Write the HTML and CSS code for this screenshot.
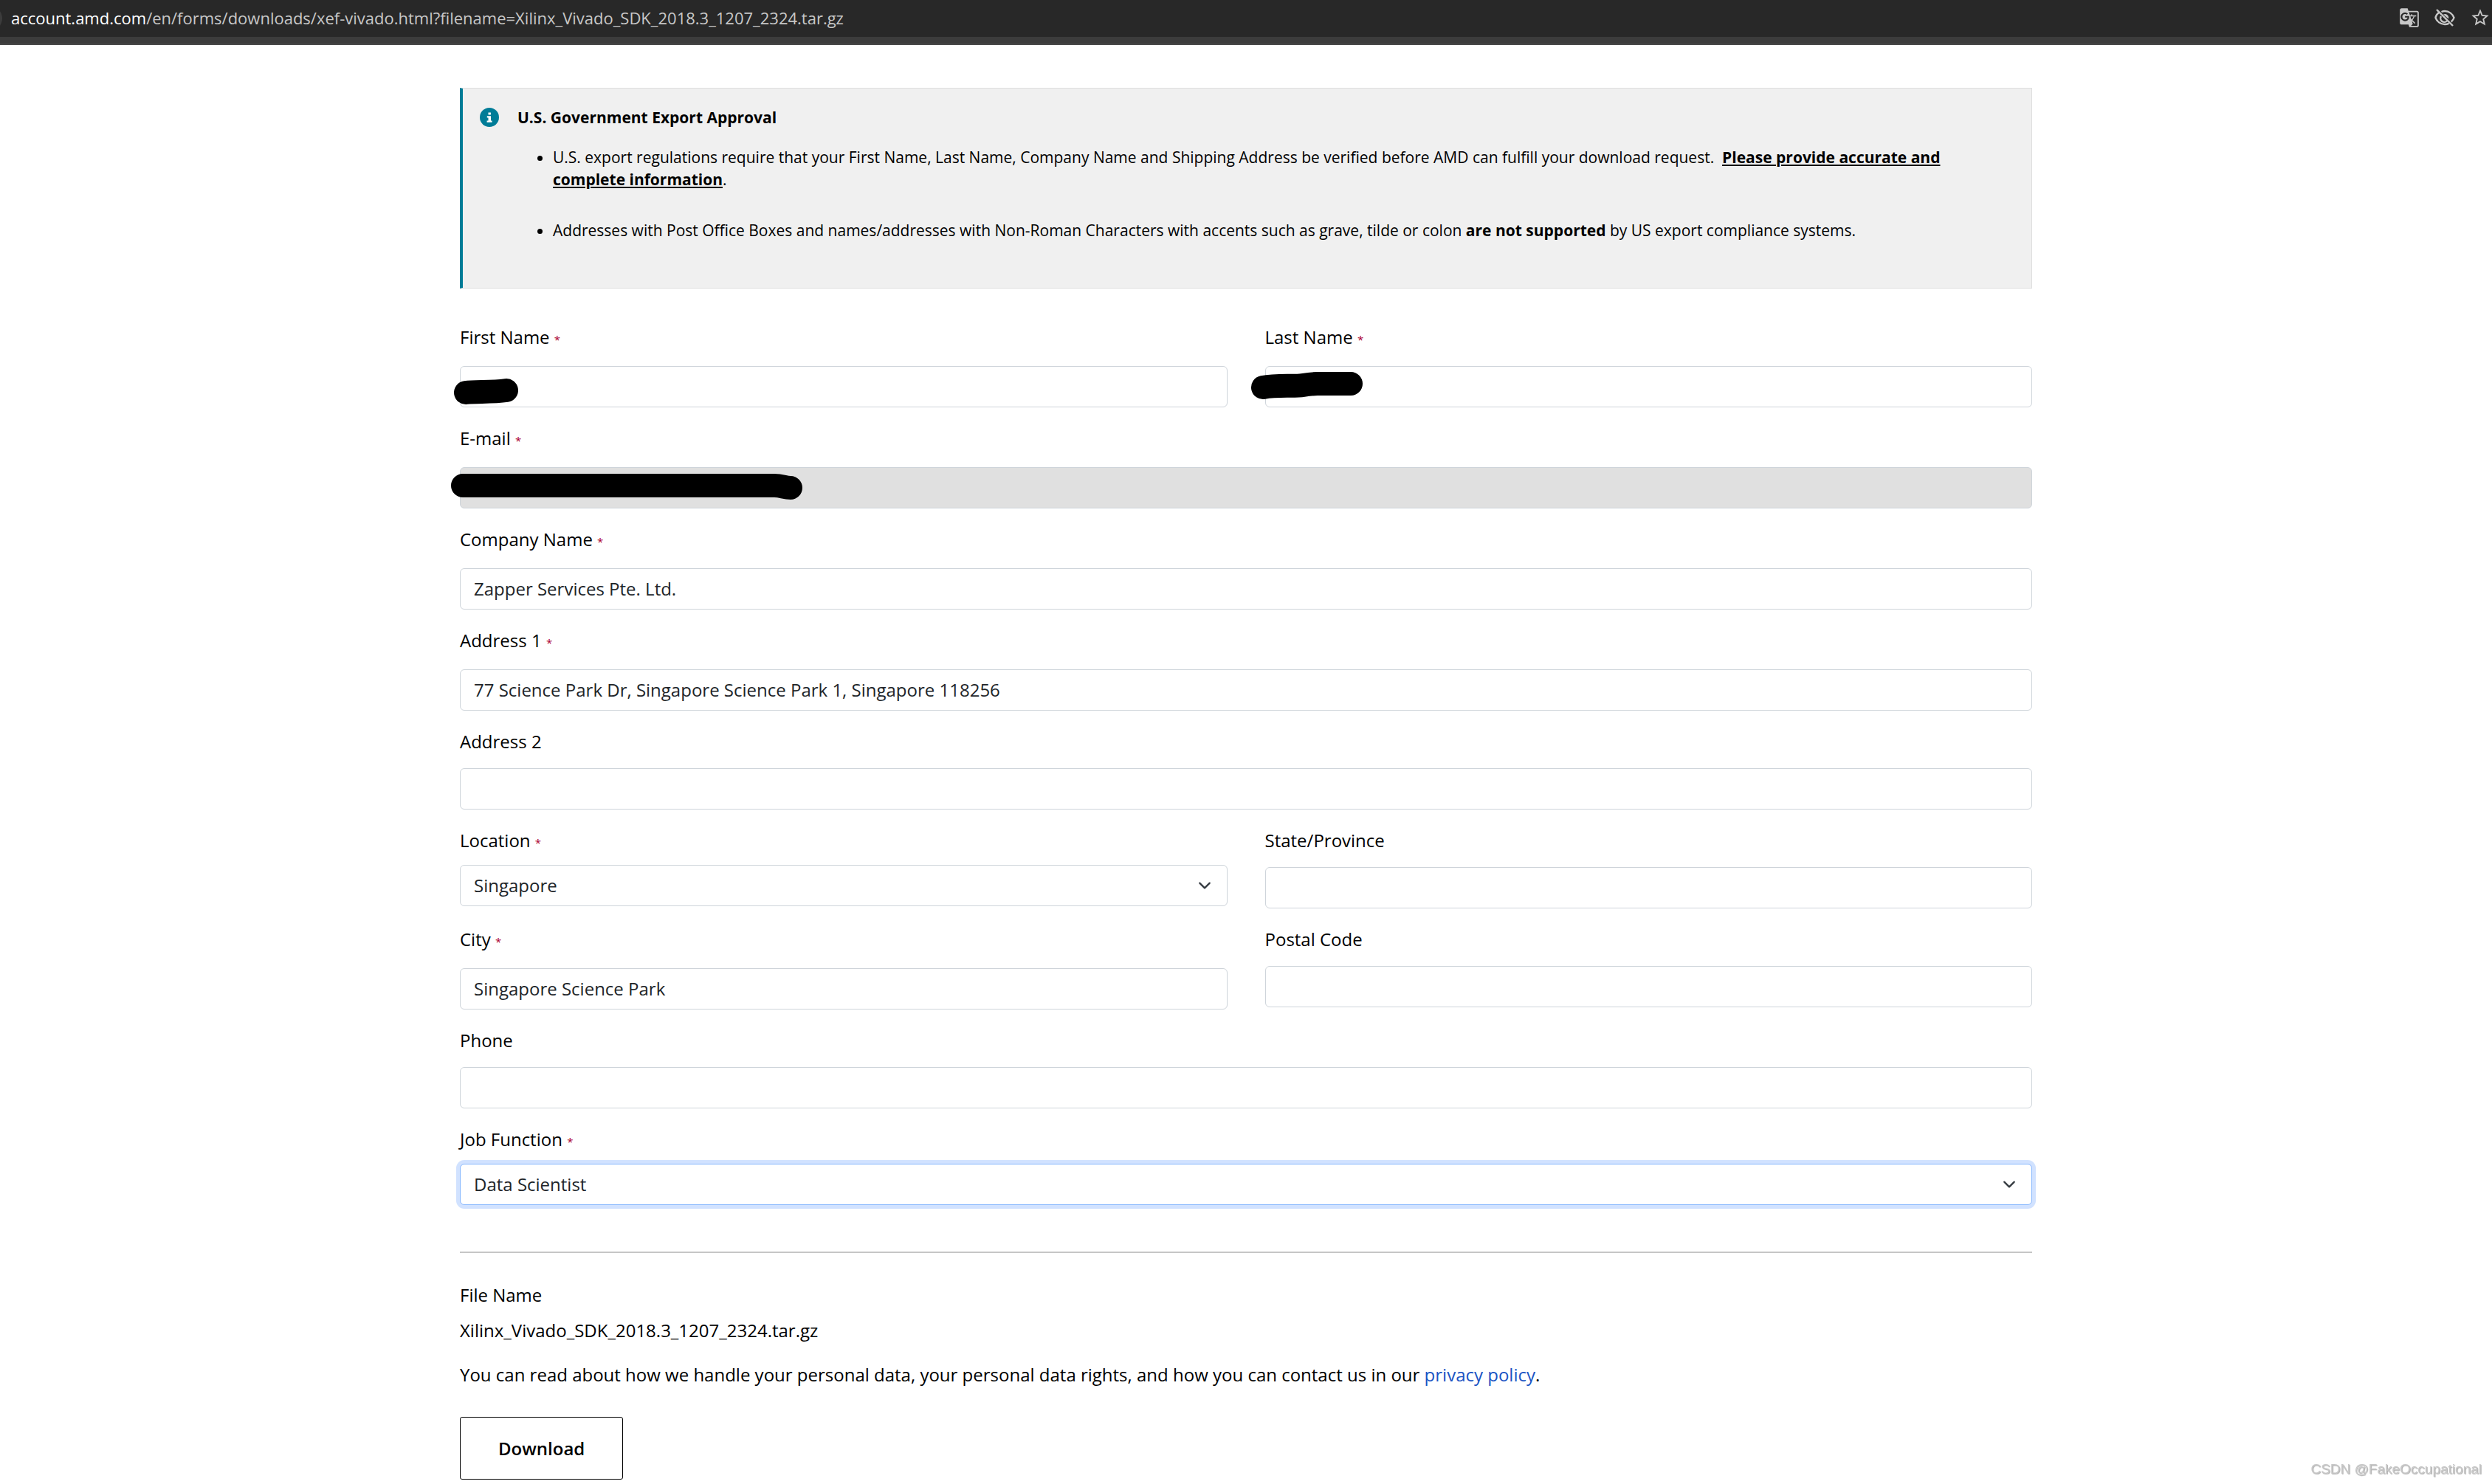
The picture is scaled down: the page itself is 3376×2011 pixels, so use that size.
FILE: index.html
```html
<!DOCTYPE html>
<html lang="en">
  <head>
    <meta charset="utf-8" />
    <title>U.S. Government Export Approval</title>
    <link rel="stylesheet" href="styles.css" />
  </head>
  <body>
    <div class="address-bar">
      <p class="url"><span class="url-host">account.amd.com</span>/en/forms/downloads/xef-vivado.html?filename=Xilinx_Vivado_SDK_2018.3_1207_2324.tar.gz</p>
      <div class="address-icons">
        <svg width="28" height="28" viewBox="0 0 24 24" fill="currentColor">
          <path d="M21 4H11l-1-3H3c-1.1 0-2 .9-2 2v15c0 1.1.9 2 2 2h8l1 3h9c1.1 0 2-.9 2-2V6c0-1.1-.9-2-2-2zM7 16c-2.76 0-5-2.24-5-5s2.24-5 5-5c1.35 0 2.48.5 3.35 1.3L9.03 8.57c-.38-.36-1.04-.78-2.03-.78-1.74 0-3.15 1.44-3.15 3.21S5.26 14.21 7 14.21c2.01 0 2.84-1.44 2.92-2.41H7v-1.71h4.68c.07.31.12.61.12 1.02C11.8 13.97 9.89 16 7 16zm6.17-5.42h3.7c-.43 1.25-1.11 2.43-2.05 3.47-.31-.35-.6-.72-.86-1.1l-.79-2.37zm8.33 9.92c0 .55-.45 1-1 1H14l2-2.5-1.04-3.1 3.1 3.1.92-.92-3.3-3.25.02-.02c1.13-1.25 1.93-2.69 2.4-4.22H20v-1.3h-4.53V8h-1.29v1.29h-1.44L11.46 5.5h9.04c.55 0 1 .45 1 1v14z" />
        </svg>
        <svg width="28" height="28" viewBox="0 0 28 28" fill="none" stroke="currentColor" stroke-width="2.4">
          <path d="M6 7C3.500 9 2 11.500 1.500 14c1.700 5 6.700 9 12.500 9 2 0 4-.5 5.800-1.400M9.500 6c1.400-.6 2.900-1 4.500-1 5.800 0 10.800 4 12.500 9-.7 2.200-2 4-3.700 5.500" />
          <path d="M9 12a5.200 5.200 0 0 0 8 6.500" />
          <path d="M12 9.500a5 5 0 0 1 7 6z" fill="currentColor" stroke="none" />
          <path d="M3 3l22 22" />
        </svg>
        <svg width="28" height="28" viewBox="0 0 24 24" fill="currentColor">
          <path d="M22 9.24l-7.19-.62L12 2 9.19 8.63 2 9.24l5.46 4.730L5.820 21 12 17.270 18.180 21l-1.630-7.030L22 9.240zM12 15.400l-3.760 2.270 1-4.280-3.320-2.880 4.380-.380L12 6.100l1.710 4.040 4.380.380-3.320 2.880 1 4.280L12 15.400z" />
        </svg>
      </div>
    </div>

    <div class="container">
      <div class="alert">
        <svg class="alert-icon" width="26" height="26" viewBox="0 0 26 26">
          <circle cx="13" cy="13" r="13" fill="#007c97" />
          <path d="M11.500 6.500h3.400v3h-3.400zM9.800 11.300h5.200v6.200h1.600v2.200H9.600v-2.200h1.900v-4H9.800z" fill="#fff" />
        </svg>
        <div>
          <h2>U.S. Government Export Approval</h2>
          <ul>
            <li>U.S. export regulations require that your First Name, Last Name, Company Name and Shipping Address be verified before AMD can fulfill your download request.&nbsp; <b class="underline">Please provide accurate and complete information</b>.</li>
            <li>Addresses with Post Office Boxes and names/addresses with Non-Roman Characters with accents such as grave, tilde or colon <b>are not supported</b> by US export compliance systems.</li>
          </ul>
        </div>
      </div>

      <form>
        <div class="form-row">
          <div class="form-group required">
            <label for="first_name">First Name <span class="star">*</span></label>
            <div class="control">
              <input type="text" id="first_name" name="first_name" />
              <svg class="redacted" width="110" height="56"><path d="M28 36C42 34 62 36 83 33" /></svg>
            </div>
          </div>
          <div class="form-group required">
            <label for="last_name">Last Name <span class="star">*</span></label>
            <div class="control">
              <input type="text" id="last_name" name="last_name" />
              <svg class="redacted" width="170" height="56"><path d="M17 29C37 25 59 28 71 26S84 24 91 24H136" /></svg>
            </div>
          </div>
        </div>
        <div class="form-group required">
          <label for="email">E-mail <span class="star">*</span></label>
          <div class="control">
            <input type="email" id="email" name="email" disabled />
            <svg class="redacted" width="500" height="56"><path d="M24 25H446C456 25 460 28 468 28" /></svg>
          </div>
        </div>
        <div class="form-group required">
          <label for="company">Company Name <span class="star">*</span></label>
          <input type="text" id="company" name="company" value="Zapper Services Pte. Ltd." />
        </div>
        <div class="form-group required">
          <label for="address1">Address 1 <span class="star">*</span></label>
          <input type="text" id="address1" name="address1" value="77 Science Park Dr, Singapore Science Park 1, Singapore 118256" />
        </div>
        <div class="form-group">
          <label for="address2">Address 2</label>
          <input type="text" id="address2" name="address2" />
        </div>
        <div class="form-row">
          <div class="form-group select-group">
            <label for="location">Location <span class="star">*</span></label>
            <div class="control">
              <select id="location" name="location">
                <option>Singapore</option>
              </select>
              <svg class="chevron" width="18" height="18" viewBox="0 0 16 16"><path d="m2 5 6 6 6-6" /></svg>
            </div>
          </div>
          <div class="form-group">
            <label for="state">State/Province</label>
            <input type="text" id="state" name="state" />
          </div>
        </div>
        <div class="form-row">
          <div class="form-group required">
            <label for="city">City <span class="star">*</span></label>
            <input type="text" id="city" name="city" value="Singapore Science Park" />
          </div>
          <div class="form-group">
            <label for="postal">Postal Code</label>
            <input type="text" id="postal" name="postal" />
          </div>
        </div>
        <div class="form-group">
          <label for="phone">Phone</label>
          <input type="tel" id="phone" name="phone" />
        </div>
        <div class="form-group select-group">
          <label for="job">Job Function <span class="star">*</span></label>
          <div class="control">
            <select id="job" name="job" class="active">
              <option>Data Scientist</option>
            </select>
            <svg class="chevron" width="18" height="18" viewBox="0 0 16 16"><path d="m2 5 6 6 6-6" /></svg>
          </div>
        </div>

        <hr />

        <p class="file-label">File Name</p>
        <p class="file-name">Xilinx_Vivado_SDK_2018.3_1207_2324.tar.gz</p>
        <p class="privacy">You can read about how we handle your personal data, your personal data rights, and how you can contact us in our <a href="#">privacy policy</a>.</p>
        <button class="download" type="submit">Download</button>
      </form>
    </div>

    <div class="watermark">CSDN @FakeOccupational</div>
  </body>
</html>
```

FILE: styles.css
```css
* {
  box-sizing: border-box;
}

body {
  margin: 0;
  background-color: #fff;
  color: #000;
  font-family: "Open Sans", "Noto Sans", sans-serif;
  font-size: 24px;
  line-height: 36px;
}

p,
h2,
ul {
  margin: 0;
}

/* browser bar */
.address-bar {
  position: relative;
  display: flex;
  align-items: center;
  justify-content: space-between;
  height: 61px;
  padding: 0 2px 13px 15px;
  background: linear-gradient(#282828 50px, #3c3c3c 50px, #3c3c3c 59px, #484848 59px);
  color: #c7c7c7;
}

/* end of the site button, cut off by the window edge */
.address-bar::before {
  content: "";
  position: absolute;
  top: 8px;
  left: -31px;
  width: 34px;
  height: 34px;
  border-radius: 50%;
  background-color: #3c3c3c;
}

.url {
  font-size: 22px;
  line-height: 30px;
  white-space: nowrap;
}

.url-host {
  color: #fff;
}

.address-icons {
  display: flex;
  gap: 20px;
}

.container {
  max-width: 2130px;
  margin: 58px auto 0;
}

/* notice */
.alert {
  display: flex;
  gap: 25px;
  padding: 24px 48px 63px 23px;
  margin-bottom: 48px;
  background-color: #f0f0f0;
  border: 1px solid #dedede;
  border-left: 4px solid #007c97;
  font-size: 21px;
  line-height: 30px;
}

.alert-icon {
  flex-shrink: 0;
  margin-top: 2px;
}

.alert h2 {
  font-size: 21px;
  font-weight: 700;
  margin-bottom: 24px;
}

.alert ul {
  padding-left: 48px;
}

.alert li + li {
  margin-top: 39px;
}

.underline {
  text-decoration: underline;
}

/* form */
.form-row {
  display: grid;
  grid-template-columns: 1fr 1fr;
  column-gap: 51px;
}

.form-group {
  margin-bottom: 24px;
}

.form-group label {
  display: block;
  margin-bottom: 18px;
}

.required label {
  margin-bottom: 21px;
}

.select-group label {
  margin-bottom: 15px;
}

/* the row takes its height from the text box */
.form-row .select-group {
  margin-bottom: 0;
}

.star {
  color: #ab0032;
  font-size: 15px;
  line-height: 15px;
}

.control {
  position: relative;
}

.form-group input,
.form-group select {
  display: block;
  width: 100%;
  height: 56px;
  padding: 9px 18px;
  font: inherit;
  color: #212529;
  background-color: #fff;
  border: 1px solid #ced4da;
  border-radius: 6px;
}

.form-group input {
  padding: 8px 18px 10px;
}

.form-group input:disabled {
  background-color: #e0e0e0;
}

.form-group select {
  appearance: none;
}

.form-group select.active {
  border-color: #86b7fe;
  box-shadow: 0 0 0 5px #d1e2ff;
}

.chevron {
  position: absolute;
  top: 19px;
  right: 22px;
  fill: none;
  stroke: #343a40;
  stroke-width: 2;
  stroke-linecap: round;
  stroke-linejoin: round;
  pointer-events: none;
}

.redacted {
  position: absolute;
  top: 0;
  left: -20px;
  fill: none;
  stroke: #000;
  stroke-width: 32;
  stroke-linecap: round;
  pointer-events: none;
}

hr {
  margin: 63px 0 39px;
  border: none;
  border-top: 2px solid #c6c6c6;
}

.file-name {
  margin-top: 12px;
}

.privacy {
  margin-top: 24px;
}

.privacy a {
  color: #1b55c4;
  text-decoration: none;
}

.download {
  margin-top: 39px;
  padding: 24px 51px 23px;
  font: inherit;
  font-weight: 600;
  color: #000;
  background-color: #fff;
  border: 1px solid #000;
  border-radius: 3px;
  cursor: pointer;
}

.watermark {
  position: fixed;
  right: 14px;
  bottom: 6px;
  font-family: "Liberation Sans", Arial, sans-serif;
  font-size: 19px;
  line-height: 28px;
  color: #c8c8c8;
  text-shadow: 1px 1px 1px #aaa;
}
```
